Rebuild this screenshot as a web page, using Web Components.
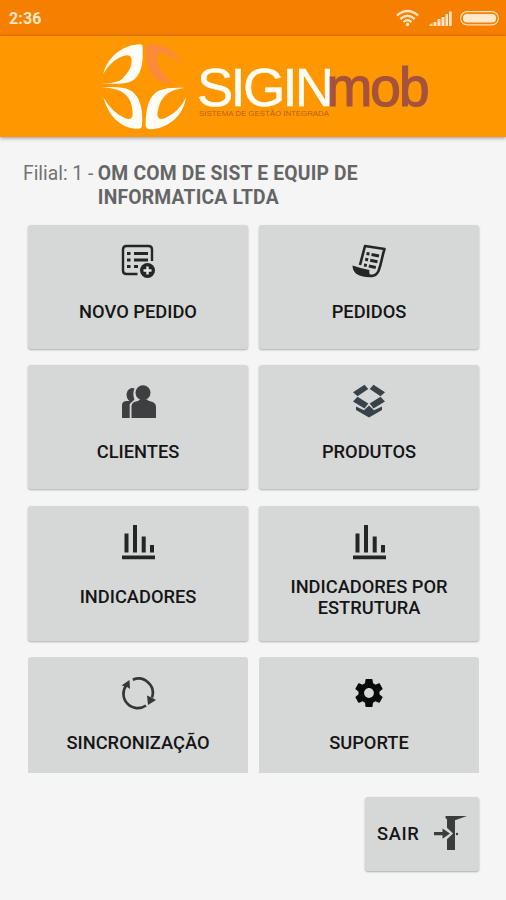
<!DOCTYPE html>
<html lang="pt-BR">
<head>
<meta charset="utf-8">
<title>SIGINmob</title>
<style>
body { margin: 0; width: 506px; height: 900px; overflow: hidden; background: #f5f5f5; font-family: Roboto, "Liberation Sans", sans-serif; }
</style>
</head>
<body>
<sigin-app></sigin-app>
<script>
const ICONS = {
  novo: `<g fill="none" stroke="#222625" stroke-width="2.400"><path d="M16.500 30H5.500Q2 30 2 26.500V5.500Q2 2 5.500 2H27.500Q31 2 31 5.500V17"/><path stroke-width="2.800" d="M6 9.500h3.500M13 9.500h14M6 16h3.500M13 16h14M6 22.500h3.500M13 22.500h4"/></g><circle cx="26.500" cy="26.500" r="7.500" fill="#222625"/><path d="M26.500 22.500v8M22.500 26.500h8" stroke="#e4e7e5" stroke-width="2.400"/>`,
  pedidos: `<g fill="none" stroke="#222625" stroke-width="2.600" stroke-linejoin="round"><path d="M8 21L13 2 32.500 5C30 12 30 18 26.500 27Q23.500 33 18 31.500"/><path stroke-width="3" d="M14.500 9.500l3 .5M19.500 10.500l7.500 1.500M13.200 15.300l3 .5M18.200 16.300l7.300 1.500M12 21l2.800.5M16.800 22l7 1.500"/></g><path d="M.5 21.500Q9 24.500 17.500 26Q16 31 21.500 33Q12 34 4.500 30Q.5 27 .5 21.500Z" fill="#222625"/>`,
  clientes: `<g fill="#3d3f40"><path d="M13.500 4.500A6 6 0 0 0 5.500 10Q5.500 15 8.500 17H5Q1 17.500 1 21V34H8.700V20L12.500 16.500Q14 16 13 14Q11.500 9 13.500 4.500Z"/><circle cx="22" cy="8.700" r="7.500"/><path d="M10.500 34V22Q11 18 15 17.500Q18 17 19 15.500H26Q27 17 30 17.500Q35 18.500 35 23V34Z"/></g>`,
  produtos: `<g fill="#39424b"><path d="M1 8.200L12.500 .8 16.300 5 5.500 12.200Z"/><path d="M33 8.200L21.500 .8 17.700 5 28.500 12.200Z"/><path d="M1 17.500L5.500 12.800 16.300 19.500 12.500 24.500Z"/><path d="M33 17.500L28.500 12.800 17.700 19.500 21.500 24.500Z"/><path d="M4 22.500L12 26.300 17 21.500 22 26.300 30 22.500V26L17 33.500 4 26Z"/></g>`,
  indicadores: `<g fill="#222625"><path d="M3.500 8.500h4V27.500h-4zM12 0h4v27.500h-4zM20.700 11.500h4v16h-4zM29 20h4v7.500h-4zM1 30.500h33v3.700H1z"/></g>`,
  sync: `<g fill="none" stroke="#333736" stroke-width="2.700"><path d="M11.800 3.800A14.300 14.300 0 0 1 31 21.500"/><path d="M25 29.500A14.300 14.300 0 0 1 5.500 9"/></g><path d="M.5 9.500L8.500 4 9 13 5.500 10.500Z" fill="#333736"/><path d="M26 19.500L30.500 21.500 35 24 27 29Z" fill="#333736"/>`,
  suporte: `<path transform="translate(.2 .2) scale(1.4)" fill="#080a09" d="M19.430 12.980c.04-.32.07-.64.07-.98s-.03-.66-.07-.98l2.110-1.650c.19-.15.24-.42.12-.64l-2-3.460c-.12-.22-.39-.3-.61-.22l-2.490 1c-.52-.4-1.080-.73-1.690-.98l-.38-2.650C14.460 2.180 14.250 2 14 2h-4c-.25 0-.46.18-.49.42l-.38 2.650c-.61.25-1.170.59-1.690.98l-2.490-1c-.23-.09-.49 0-.61.22l-2 3.460c-.13.22-.07.49.12.64l2.110 1.650c-.04.32-.07.65-.07.98s.03.66.07.98l-2.110 1.650c-.19.15-.24.42-.12.64l2 3.460c.12.22.39.3.61.22l2.490-1c.52.4 1.080.73 1.690.98l.38 2.650c.03.24.24.42.49.42h4c.25 0 .46-.18.49-.42l.38-2.650c.61-.25 1.170-.59 1.690-.98l2.490 1c.23.09.49 0 .61-.22l2-3.460c.12-.22.07-.49-.12-.64l-2.110-1.650zM12 15.500c-1.930 0-3.500-1.570-3.500-3.500s1.570-3.500 3.500-3.500 3.500 1.570 3.500 3.500-1.570 3.500-3.500 3.500z"/>`,
  sair: `<path d="M12.500 0H34L22 4.300V34H14V3.500L12.500 2Z" fill="#3a3d3c"/><path d="M11 9L20 17.500 11 26" fill="#d6d8d7"/><path d="M1 16H9.500V12.500L17 17.600 9.500 22.700V19.300H1Z" fill="#3a3d3c"/><circle cx="24" cy="18" r="1.200" fill="#3a3d3c"/>`
};

function define(name, markup, setup) {
  const template = document.createElement('template');
  template.innerHTML = markup;
  customElements.define(name, class extends HTMLElement {
    connectedCallback() {
      if (this.shadowRoot) return;
      const root = this.attachShadow({ mode: 'open' });
      root.append(template.content.cloneNode(true));
      if (setup) setup(this, root);
    }
  });
}

define('app-icon', `<style>
:host { display: block; width: 35px; height: 35px; flex: none; }
svg { display: block; }
</style><svg width="35" height="35" viewBox="0 0 35 35"></svg>`,
(el, root) => { root.querySelector('svg').innerHTML = ICONS[el.getAttribute('name')]; });

define('status-bar', `<style>
:host { display: flex; align-items: center; justify-content: space-between; height: 36px; box-sizing: border-box; padding: 0 6px 0 9px; background: #f77f00; border-bottom: 1px solid #ed7d04; color: #ffe9cc; }
time { font-size: 16px; font-weight: 700; letter-spacing: .1px; padding-top: 2px; }
svg { display: block; }
</style><time>2:36</time>
<svg width="104" height="20" viewBox="0 0 104 20">
<g fill="none" stroke="#ffe5c3" stroke-width="2.400"><path d="M1 7.500Q11.500-1.500 22 7.500M4.300 11Q11.500 4.500 18.700 11M7.500 14.200Q11.500 10.500 15.500 14.200"/></g><circle cx="11.500" cy="16.500" r="1.800" fill="#ffe5c3"/>
<path fill="#ffe5c3" d="M33.500 18V16.500L36.500 15.300V18ZM37.500 18V14h3v4ZM41.500 18V11h3v7ZM45.500 18V9h3v9ZM49.500 18V6h2.500v12ZM53 18V3.500h2.800V18Z"/>
<rect x="64.600" y="3.600" width="37.800" height="13.300" rx="6.600" fill="none" stroke="#ffe0b8" stroke-width="1.200"/><rect x="67" y="6" width="33" height="8.600" rx="4" fill="#ffe9cc"/>
</svg>`);

define('brand-header', `<style>
:host { display: flex; justify-content: flex-start; height: 101px; box-sizing: border-box; padding-left: 95px; background: #ff9800; box-shadow: 0 1px 4px rgba(0,0,0,.4); position: relative; }
svg { display: block; margin-top: 2px; font-family: "Liberation Sans", sans-serif; }
</style>
<svg width="345" height="98" viewBox="0 0 345 98">
<g transform="scale(.3333)" fill="#fffdf5">
<path d="M25 107C38 55 86 20 135 19Q144 19 143 32C145 75 139 112 112 128Q90 140 20 137Q68 136 82 122C100 105 114 82 109 61Q105 43 72 59Q45 73 25 107Z"/>
<path d="M20 148C90 143 115 153 130 183Q145 214 141 262Q141 274 125 272C78 271 40 235 25 178Q51 225 91 241Q114 249 113 225C111 190 101 151 20 148Z"/>
<path d="M273 150C208 147 182 155 166 183Q151 212 152 263Q153 274 170 274C225 270 266 230 273 178Q253 222 211 240Q187 249 187 229C192 190 208 153 273 150Z"/>
<path fill="#fb8a3c" d="M155 31Q155 18 168 19C210 20 246 42 265 82Q238 53 202 46Q185 43 186 62C189 94 214 120 240 138C200 134 179 126 167 103Q153 78 155 31Z"/>
</g>
<text x="102" y="67.500" font-size="54.500" letter-spacing="-2.800" fill="#fffdf5" stroke="#fffdf5" stroke-width=".5">SIGIN</text>
<text x="231.500" y="67.500" font-size="55" letter-spacing="-2" fill="#a5523e" stroke="#a5523e" stroke-width="1.200">mob</text>
<text x="104" y="78" font-size="7.200" textLength="130" lengthAdjust="spacingAndGlyphs" fill="#b9601c">SISTEMA DE GESTÃO INTEGRADA</text>
</svg>`);

define('branch-info', `<style>
:host { display: flex; gap: 4.500px; padding: 25px 24px 0 23px; font-size: 19.300px; line-height: 23.500px; color: #727272; }
strong { width: 280px; color: #656565; font-weight: 700; letter-spacing: .2px; }
</style><span><slot name="prefix"></slot></span><strong><slot></slot></strong>`);

define('menu-tile', `<style>
:host { display: flex; flex-direction: column; align-items: center; box-sizing: border-box; padding-top: 19px; background: #d6d8d7; border-radius: 3px; box-shadow: 0 1px 2px rgba(0,0,0,.3); color: #151515; }
.label { display: flex; align-items: center; justify-content: center; text-align: center; height: 42px; margin-top: var(--drop, 11.500px); font-size: 18.300px; line-height: 21px; font-weight: 500; white-space: pre-line; }
</style><app-icon></app-icon><div class="label"><slot></slot></div>`,
(el, root) => {
  const icon = document.createElement('app-icon');
  icon.setAttribute('name', el.getAttribute('icon'));
  root.querySelector('app-icon').replaceWith(icon);
});

define('exit-button', `<style>
:host { display: flex; align-items: center; justify-content: space-between; width: 114px; height: 74px; box-sizing: border-box; padding: 0 11px 0 12px; margin: 24px 27px 0 auto; background: #d6d8d7; border-radius: 3px; box-shadow: 0 1px 2px rgba(0,0,0,.3); color: #151515; font-size: 18.300px; letter-spacing: .6px; font-weight: 500; }
</style><slot></slot><app-icon name="sair"></app-icon>`);

define('sigin-app', `<style>
:host { display: block; }
.grid { display: grid; grid-template-columns: 220px 220px; grid-template-rows: 124px 124px 135px 116px; column-gap: 11px; row-gap: 16.300px; padding: 16px 0 0 28px; }
.tall { --drop: 16px; }
.short { --drop: 11px; }
.last { border-radius: 3px 3px 0 0; box-shadow: none; }
</style>
<status-bar></status-bar>
<brand-header></brand-header>
<branch-info><span slot="prefix">Filial: 1 -</span>OM COM DE SIST E EQUIP DE INFORMATICA LTDA</branch-info>
<div class="grid">
<menu-tile icon="novo">NOVO PEDIDO</menu-tile>
<menu-tile icon="pedidos">PEDIDOS</menu-tile>
<menu-tile icon="clientes">CLIENTES</menu-tile>
<menu-tile icon="produtos">PRODUTOS</menu-tile>
<menu-tile class="tall" icon="indicadores">INDICADORES</menu-tile>
<menu-tile class="tall" icon="indicadores">INDICADORES POR
ESTRUTURA</menu-tile>
<menu-tile class="short last" icon="sync">SINCRONIZAÇÃO</menu-tile>
<menu-tile class="short last" icon="suporte">SUPORTE</menu-tile>
</div>
<exit-button>SAIR</exit-button>`);
</script>
</body>
</html>
